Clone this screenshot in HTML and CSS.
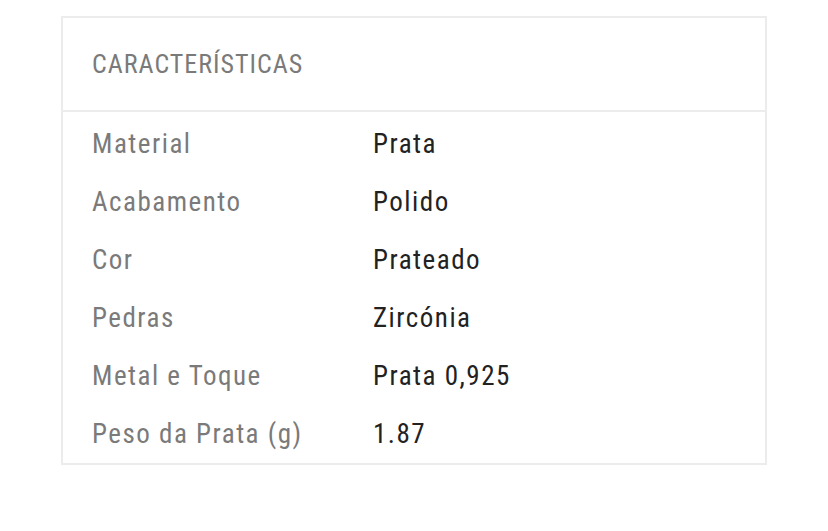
FILE: index.html
```html
<!DOCTYPE html>
<html lang="pt">
<head>
    <meta charset="UTF-8">
    <meta name="viewport" content="width=device-width, initial-scale=1.0">
    <title>Características</title>
    <link rel="stylesheet" href="styles.css">
</head>
<body>
    <div class="specs">
        <div class="specs-title">CARACTERÍSTICAS</div>
        <div class="specs-list">
            <div class="row"><span class="label">Material</span><span class="value">Prata</span></div>
            <div class="row"><span class="label">Acabamento</span><span class="value">Polido</span></div>
            <div class="row"><span class="label">Cor</span><span class="value">Prateado</span></div>
            <div class="row"><span class="label">Pedras</span><span class="value">Zircónia</span></div>
            <div class="row"><span class="label">Metal e Toque</span><span class="value">Prata 0,925</span></div>
            <div class="row"><span class="label">Peso da Prata (g)</span><span class="value">1.87</span></div>
        </div>
    </div>
</body>
</html>
```

FILE: styles.css
```css
body {
    margin: 0;
    padding: 16px 0 0 61px;
    background: #fff;
    font-family: "Roboto Condensed", Roboto, "Liberation Sans", sans-serif;
    font-stretch: condensed;
}

.specs {
    width: 702px;
    border: 2px solid #ececec;
    box-shadow: 0 6px 0 -4px #f6f6f6;
}

.specs-title {
    height: 92px;
    padding-left: 29px;
    display: flex;
    align-items: center;
    border-bottom: 2px solid #ececec;
    color: #7a7a7a;
    font-size: 26px;
    letter-spacing: 1px;
}

.specs-list {
    padding-top: 3px;
}

.row {
    display: flex;
    align-items: center;
    height: 58px;
    padding-left: 29px;
    font-size: 27px;
    letter-spacing: 1.5px;
}

.label {
    width: 281px;
    color: #7a7a7a;
}

.value {
    color: #222;
}
```
